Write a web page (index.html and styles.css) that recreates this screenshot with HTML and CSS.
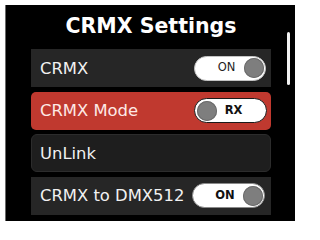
FILE: index.html
```html
<!DOCTYPE html>
<html>
<head>
<meta charset="utf-8">
<link rel="stylesheet" href="styles.css">
</head>
<body>
<div class="screen">
  <h1 class="title">CRMX Settings</h1>
  <div class="scrollbar"></div>
  <div class="list">
    <div class="row row-square">
      <span class="label">CRMX</span>
      <div class="toggle toggle-light on pad-on">
        <span class="toggle-text">ON</span>
        <span class="knob"></span>
      </div>
    </div>
    <div class="row row-active">
      <span class="label">CRMX Mode</span>
      <div class="toggle toggle-dark">
        <span class="knob"></span>
        <span class="toggle-text bold pad-rx">RX</span>
      </div>
    </div>
    <div class="row row-round">
      <span class="label">UnLink</span>
    </div>
    <div class="row row-square">
      <span class="label">CRMX to DMX512</span>
      <div class="toggle toggle-mid">
        <span class="toggle-text bold pad-on">ON</span>
        <span class="knob"></span>
      </div>
    </div>
  </div>
</div>
</body>
</html>
```

FILE: styles.css
```css
html, body {
  margin: 0;
  padding: 0;
  background: #ffffff;
}

body {
  width: 300px;
  height: 227px;
  overflow: hidden;
  font-family: "DejaVu Sans", "Liberation Sans", sans-serif;
}

.screen {
  position: relative;
  box-sizing: border-box;
  margin: 5px 0 0 5px;
  width: 290px;
  height: 216px;
  background: #000000;
  border-left: 1px solid #6a6a6a;
  padding: 9px 0 0 25px;
}

.title {
  margin: 0;
  width: 240px;
  text-align: center;
  color: #ffffff;
  font-size: 20.5px;
  font-weight: bold;
  line-height: 24px;
}

.scrollbar {
  position: absolute;
  left: 281px;
  top: 27px;
  width: 3px;
  height: 53px;
  border-radius: 2px;
  background: #f2f2f2;
}

.list {
  margin-top: 11px;
  width: 240px;
  display: flex;
  flex-direction: column;
  gap: 4.5px;
}

.row {
  box-sizing: border-box;
  height: 38px;
  display: flex;
  align-items: center;
  justify-content: space-between;
  padding: 0 5px 0 9px;
  background: #262626;
}

.row-square {
  border-radius: 0;
}

.row-active {
  background: #c0392f;
  border-radius: 5px;
  padding-right: 4px;
}

.row-round {
  background: #1e1e1e;
  border: 1px solid #2c2c2c;
  border-radius: 6px;
  padding-left: 8px;
}

.label {
  color: #f1f1f1;
  font-size: 16.4px;
  white-space: nowrap;
}

.row-active .label {
  color: #fde9e6;
}

.toggle {
  box-sizing: border-box;
  width: 72px;
  height: 25px;
  border-radius: 13px;
  background: #ffffff;
  display: flex;
  align-items: center;
  padding: 0 1.5px;
}

.toggle-light {
  border: 1px solid #c4c4c4;
}

.toggle-dark {
  border: 1.5px solid #1a1a1a;
  width: 73px;
}

.toggle-mid {
  border: 1px solid #8a8a8a;
  width: 73px;
  margin-right: 1px;
}

.toggle-text {
  flex: 1;
  text-align: center;
  font-size: 11.5px;
  color: #1e1e1e;
  line-height: 1;
}

.bold {
  font-weight: bold;
  color: #111111;
}

.pad-on .toggle-text,
.toggle-text.pad-on {
  padding-left: 13px;
}

.pad-rx {
  padding-right: 14px;
}

.knob {
  flex: none;
  width: 20px;
  height: 20px;
  border-radius: 50%;
  background: #7e7e7e;
  box-shadow: inset 0 0 0 1px #6c6c6c;
}
```
